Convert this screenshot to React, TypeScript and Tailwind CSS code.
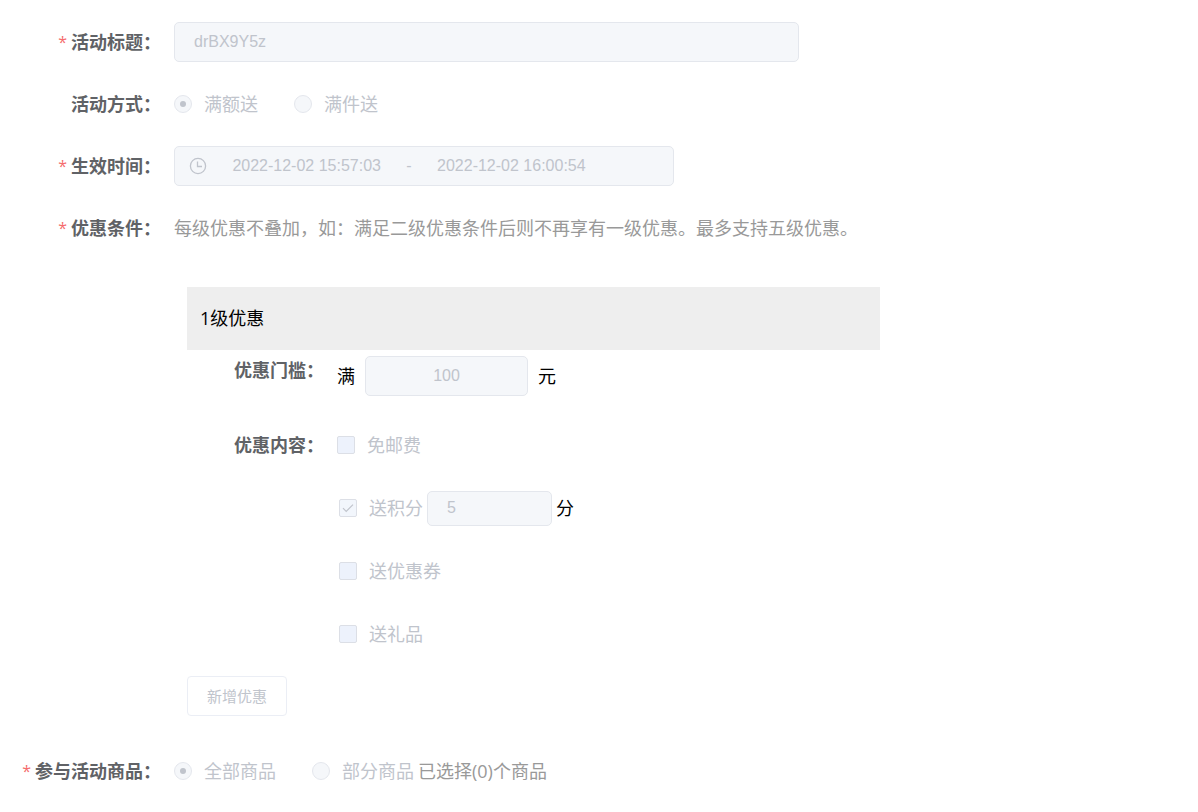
import type { ReactNode } from "react";

const field =
  "rounded-[5px] border border-[#e4e7ed] bg-[#f5f7fa] font-['Liberation_Sans',Arial,sans-serif] text-[#c0c4cc]";

function Label({ children, id, htmlFor, required, inner }: {
  children: ReactNode;
  id?: string;
  htmlFor?: string;
  required?: boolean;
  inner?: boolean;
}) {
  const style = `flex h-10 shrink-0 items-center justify-end pr-[13px] font-bold whitespace-nowrap text-[#606266] ${inner ? "w-[150px]" : "w-[174px]"}`;
  const content = (
    <>
      {required && <span className="mr-1 text-base font-normal text-[#f56c6c]">*</span>}
      {children}
    </>
  );
  return htmlFor ? (
    <label htmlFor={htmlFor} className={style}>{content}</label>
  ) : (
    <span id={id} className={style}>{content}</span>
  );
}

function Radio({ name, label, checked }: { name: string; label: string; checked?: boolean }) {
  return (
    <label className="flex items-center gap-3 text-[#c0c4cc]">
      <span className="grid shrink-0 place-items-center">
        <input
          type="radio"
          name={name}
          defaultChecked={checked}
          disabled
          className="peer col-start-1 row-start-1 size-[18px] appearance-none rounded-full border border-[#e4e7ed] bg-[#f5f7fa]"
        />
        <span className="col-start-1 row-start-1 hidden size-[6px] rounded-full bg-[#c0c4cc] peer-checked:block" />
      </span>
      {label}
    </label>
  );
}

function Checkbox({ label, checked }: { label: string; checked?: boolean }) {
  return (
    <label className="flex h-10 items-center gap-3 text-[#c0c4cc]">
      <span className="grid shrink-0 place-items-center">
        <input
          type="checkbox"
          defaultChecked={checked}
          disabled
          className="peer col-start-1 row-start-1 size-[18px] appearance-none rounded-[2px] border border-[#dcdfe6] bg-[#edf2fc] checked:bg-[#f2f6fc]"
        />
        <svg viewBox="0 0 12 10" className="col-start-1 row-start-1 hidden h-[10px] w-3 peer-checked:block" fill="none" stroke="#c0c4cc" strokeWidth="1.2">
          <path d="M1 5.2 4.2 8.4 11 1.6" />
        </svg>
      </span>
      {label}
    </label>
  );
}

export default function App() {
  return (
    <form className="bg-white pt-[22px] pb-5 font-['Open_Sans','Noto_Sans_CJK_SC',sans-serif] text-[18px] leading-6 text-black">
      <div className="flex flex-col gap-[22px]">
        <div className="flex">
          <Label htmlFor="title" required>活动标题：</Label>
          <input id="title" disabled defaultValue="drBX9Y5z" className={`${field} h-10 w-full max-w-[625px] px-[19px] text-base`} />
        </div>

        <div className="flex">
          <Label id="mode">活动方式：</Label>
          <div role="radiogroup" aria-labelledby="mode" className="flex items-center gap-9">
            <Radio name="mode" label="满额送" checked />
            <Radio name="mode" label="满件送" />
          </div>
        </div>

        <div className="flex">
          <Label htmlFor="start" required>生效时间：</Label>
          <div className={`${field} flex h-10 w-full max-w-[500px] items-center pr-[62px] pl-[14px] text-base`}>
            <svg viewBox="0 0 18 18" className="size-[18px] shrink-0" fill="none" stroke="#c0c4cc" strokeWidth="1.3">
              <circle cx="9" cy="9" r="7.6" />
              <path d="M8.5 4.4V9.5H13" />
            </svg>
            <input id="start" disabled defaultValue="2022-12-02 15:57:03" className="w-0 grow text-center" />
            <span>-</span>
            <input aria-label="结束时间" disabled defaultValue="2022-12-02 16:00:54" className="w-0 grow text-center" />
          </div>
        </div>

        <div className="flex">
          <Label required>优惠条件：</Label>
          <p className="flex items-center text-[#999999]">
            每级优惠不叠加，如：满足二级优惠条件后则不再享有一级优惠。最多支持五级优惠。
          </p>
        </div>
      </div>

      <section className="mt-[39px] ml-[187px] max-w-[693px]">
        <h2 className="bg-[#eeeeee] px-[13px] py-5 leading-[23px]">1级优惠</h2>
        <div className="flex flex-col gap-[23px]">
          <div className="flex h-[52px]">
            <Label htmlFor="threshold" inner>优惠门槛：</Label>
            <div className="flex items-center gap-[10px]">
              <span>满</span>
              <input id="threshold" disabled defaultValue="100" className={`${field} h-10 w-[163px] text-center text-base`} />
              <span>元</span>
            </div>
          </div>
          <div className="flex">
            <Label id="content" inner>优惠内容：</Label>
            <div role="group" aria-labelledby="content" className="flex flex-col gap-[23px]">
              <Checkbox label="免邮费" />
              <div className="flex items-center gap-1 pl-[2px]">
                <Checkbox label="送积分" checked />
                <input aria-label="积分" disabled defaultValue="5" className={`${field} h-[35px] w-[125px] px-[19px] text-base`} />
                <span>分</span>
              </div>
              <div className="pl-[2px]"><Checkbox label="送优惠券" /></div>
              <div className="pl-[2px]"><Checkbox label="送礼品" /></div>
            </div>
          </div>
        </div>
        <button type="button" disabled className="mt-[22px] h-10 w-[100px] rounded-[4px] border border-[#ebeef5] bg-white text-[15px] text-[#c0c4cc]">
          新增优惠
        </button>
      </section>

      <div className="mt-[35px] flex">
        <Label id="goods" required>参与活动商品：</Label>
        <div role="radiogroup" aria-labelledby="goods" className="flex items-center gap-9">
          <Radio name="goods" label="全部商品" checked />
          <div className="flex items-center gap-1">
            <Radio name="goods" label="部分商品" />
            <span className="text-[#999999]">已选择(0)个商品</span>
          </div>
        </div>
      </div>
    </form>
  );
}
